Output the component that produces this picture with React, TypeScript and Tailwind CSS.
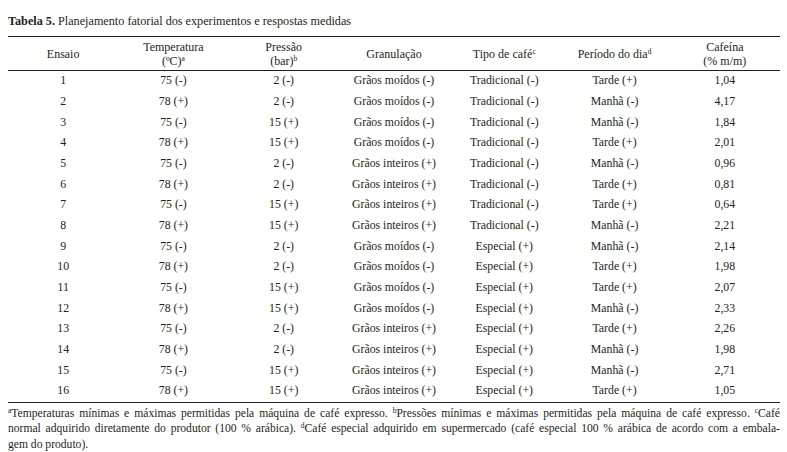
import React from "react";

const rows: string[][] = [
  ["1", "75 (-)", "2 (-)", "Grãos moídos (-)", "Tradicional (-)", "Tarde (+)", "1,04"],
  ["2", "78 (+)", "2 (-)", "Grãos moídos (-)", "Tradicional (-)", "Manhã (-)", "4,17"],
  ["3", "75 (-)", "15 (+)", "Grãos moídos (-)", "Tradicional (-)", "Manhã (-)", "1,84"],
  ["4", "78 (+)", "15 (+)", "Grãos moídos (-)", "Tradicional (-)", "Tarde (+)", "2,01"],
  ["5", "75 (-)", "2 (-)", "Grãos inteiros (+)", "Tradicional (-)", "Manhã (-)", "0,96"],
  ["6", "78 (+)", "2 (-)", "Grãos inteiros (+)", "Tradicional (-)", "Tarde (+)", "0,81"],
  ["7", "75 (-)", "15 (+)", "Grãos inteiros (+)", "Tradicional (-)", "Tarde (+)", "0,64"],
  ["8", "78 (+)", "15 (+)", "Grãos inteiros (+)", "Tradicional (-)", "Manhã (-)", "2,21"],
  ["9", "75 (-)", "2 (-)", "Grãos moídos (-)", "Especial (+)", "Manhã (-)", "2,14"],
  ["10", "78 (+)", "2 (-)", "Grãos moídos (-)", "Especial (+)", "Tarde (+)", "1,98"],
  ["11", "75 (-)", "15 (+)", "Grãos moídos (-)", "Especial (+)", "Tarde (+)", "2,07"],
  ["12", "78 (+)", "15 (+)", "Grãos moídos (-)", "Especial (+)", "Manhã (-)", "2,33"],
  ["13", "75 (-)", "2 (-)", "Grãos inteiros (+)", "Especial (+)", "Tarde (+)", "2,26"],
  ["14", "78 (+)", "2 (-)", "Grãos inteiros (+)", "Especial (+)", "Manhã (-)", "1,98"],
  ["15", "75 (-)", "15 (+)", "Grãos inteiros (+)", "Especial (+)", "Manhã (-)", "2,71"],
  ["16", "78 (+)", "15 (+)", "Grãos inteiros (+)", "Especial (+)", "Tarde (+)", "1,05"],
];

function Sup({ children }: { children: React.ReactNode }) {
  return <span className="text-[7.5px] align-[4px] leading-none">{children}</span>;
}

export default function App() {
  return (
    <div
      className="w-[787px] h-[452px] bg-white text-[#231f20] overflow-hidden"
      style={{ fontFamily: '"Liberation Serif", "Times New Roman", serif' }}
    >
      <div className="pl-2 pr-[7px] pt-[12px]">
        <div className="text-[12.2px] leading-[18px] h-[24px]">
          <span className="font-bold">Tabela 5.</span> Planejamento fatorial dos experimentos e respostas medidas
        </div>
        <div className="border-t-[1.3px] border-[#231f20]" />
        <div className="grid grid-cols-7 h-[34px] items-center text-center text-[12px] leading-[14px] border-b-[1.3px] border-[#231f20]">
          <div>Ensaio</div>
          <div>
            Temperatura
            <br />
            (ºC)<Sup>a</Sup>
          </div>
          <div>
            Pressão
            <br />
            (bar)<Sup>b</Sup>
          </div>
          <div>Granulação</div>
          <div>
            Tipo de café<Sup>c</Sup>
          </div>
          <div>
            Período do dia<Sup>d</Sup>
          </div>
          <div>
            Cafeína
            <br />
            (% m/m)
          </div>
        </div>
        <div className="border-b-[1.3px] border-[#231f20]">
          {rows.map((r, i) => (
            <div key={i} className="grid grid-cols-7 h-[20.67px] items-center text-center text-[11.8px] leading-none">
              {r.map((c, j) => (
                <div key={j}>{c}</div>
              ))}
            </div>
          ))}
        </div>
        <div className="text-[11.6px] leading-[15.5px] pt-[3px]">
          <div className="text-justify [text-align-last:justify]">
            <Sup>a</Sup>Temperaturas mínimas e máximas permitidas pela máquina de café expresso. <Sup>b</Sup>Pressões mínimas e máximas permitidas pela máquina de café expresso. <Sup>c</Sup>Café
          </div>
          <div className="text-justify [text-align-last:justify]">
            normal adquirido diretamente do produtor (100 % arábica). <Sup>d</Sup>Café especial adquirido em supermercado (café especial 100 % arábica de acordo com a embala-
          </div>
          <div>gem do produto).</div>
        </div>
      </div>
    </div>
  );
}
